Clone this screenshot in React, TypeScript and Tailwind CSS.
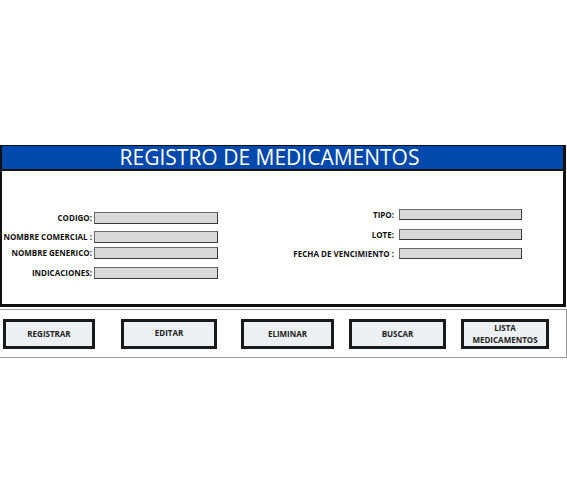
import React from "react";

const font = { fontFamily: '"Open Sans", "Liberation Sans", sans-serif' };

function Field({ label, w, inputW, h = "h-[12px]", gap = "gap-[2px]", className = "" }: { label: string; w: string; inputW: string; h?: string; gap?: string; className?: string }) {
  return (
    <div className={`flex items-center ${gap} ${className}`}>
      <div className={`${w} text-right text-[8px] font-bold leading-none text-[#111] whitespace-nowrap`}>{label}</div>
      <div className={`${inputW} ${h} bg-[#d9d9d9] border border-[#3a3a3a] border-t-[#6b6b6b] border-l-[#6b6b6b]`} />
    </div>
  );
}

function Btn({ children, className = "" }: { children: React.ReactNode; className?: string }) {
  return (
    <div className={`h-[30px] border-[3px] border-[#1a1a1a] bg-[#edf0f3] flex items-center justify-center text-center text-[8px] font-bold leading-[12px] text-[#222] ${className}`}>
      {children}
    </div>
  );
}

export default function App() {
  return (
    <div className="w-[567px] h-[488px] bg-white pt-[145px]" style={font}>
      <div className="w-[566px] border-t-[1px] border-l-2 border-r-[3px] border-b-[3px] border-[#111]">
        <div className="h-[25px] bg-[#0249ad] border-b-2 border-[#111] flex items-center justify-center pr-[26px]">
          <span className="text-white text-[21px] leading-none">REGISTRO DE MEDICAMENTOS</span>
        </div>
        <div className="h-[133px] flex bg-white">
          <div className="flex flex-col pt-[41px]">
            <Field label="CODIGO:" w="w-[90px]" inputW="w-[124px]" />
            <Field label="NOMBRE COMERCIAL :" w="w-[90px]" inputW="w-[124px]" className="mt-[7px]" />
            <Field label="NOMBRE GENERICO:" w="w-[90px]" inputW="w-[124px]" className="mt-[4px]" />
            <Field label="INDICACIONES:" w="w-[90px]" inputW="w-[124px]" className="mt-[8px]" />
          </div>
          <div className="flex flex-col pt-[38px] ml-[72px]">
            <Field label="TIPO:" w="w-[104px]" inputW="w-[123px]" h="h-[11px]" gap="gap-[5px]" />
            <Field label="LOTE:" w="w-[104px]" inputW="w-[123px]" h="h-[11px]" gap="gap-[5px]" className="mt-[9px]" />
            <Field label="FECHA DE VENCIMIENTO :" w="w-[104px]" inputW="w-[123px]" h="h-[11px]" gap="gap-[5px]" className="mt-[8px]" />
          </div>
        </div>
      </div>
      <div className="mt-[2px] w-[567px] h-[49px] border-t border-b border-r border-[#9a9a9a] flex items-start pt-[9px]">
        <Btn className="ml-[3px] w-[92px]">REGISTRAR</Btn>
        <Btn className="ml-[26px] w-[96px] pb-[2px]">EDITAR</Btn>
        <Btn className="ml-[24px] w-[93px]">ELIMINAR</Btn>
        <Btn className="ml-[15px] w-[97px]">BUSCAR</Btn>
        <Btn className="ml-[15px] w-[88px]">LISTA<br />MEDICAMENTOS</Btn>
      </div>
    </div>
  );
}
